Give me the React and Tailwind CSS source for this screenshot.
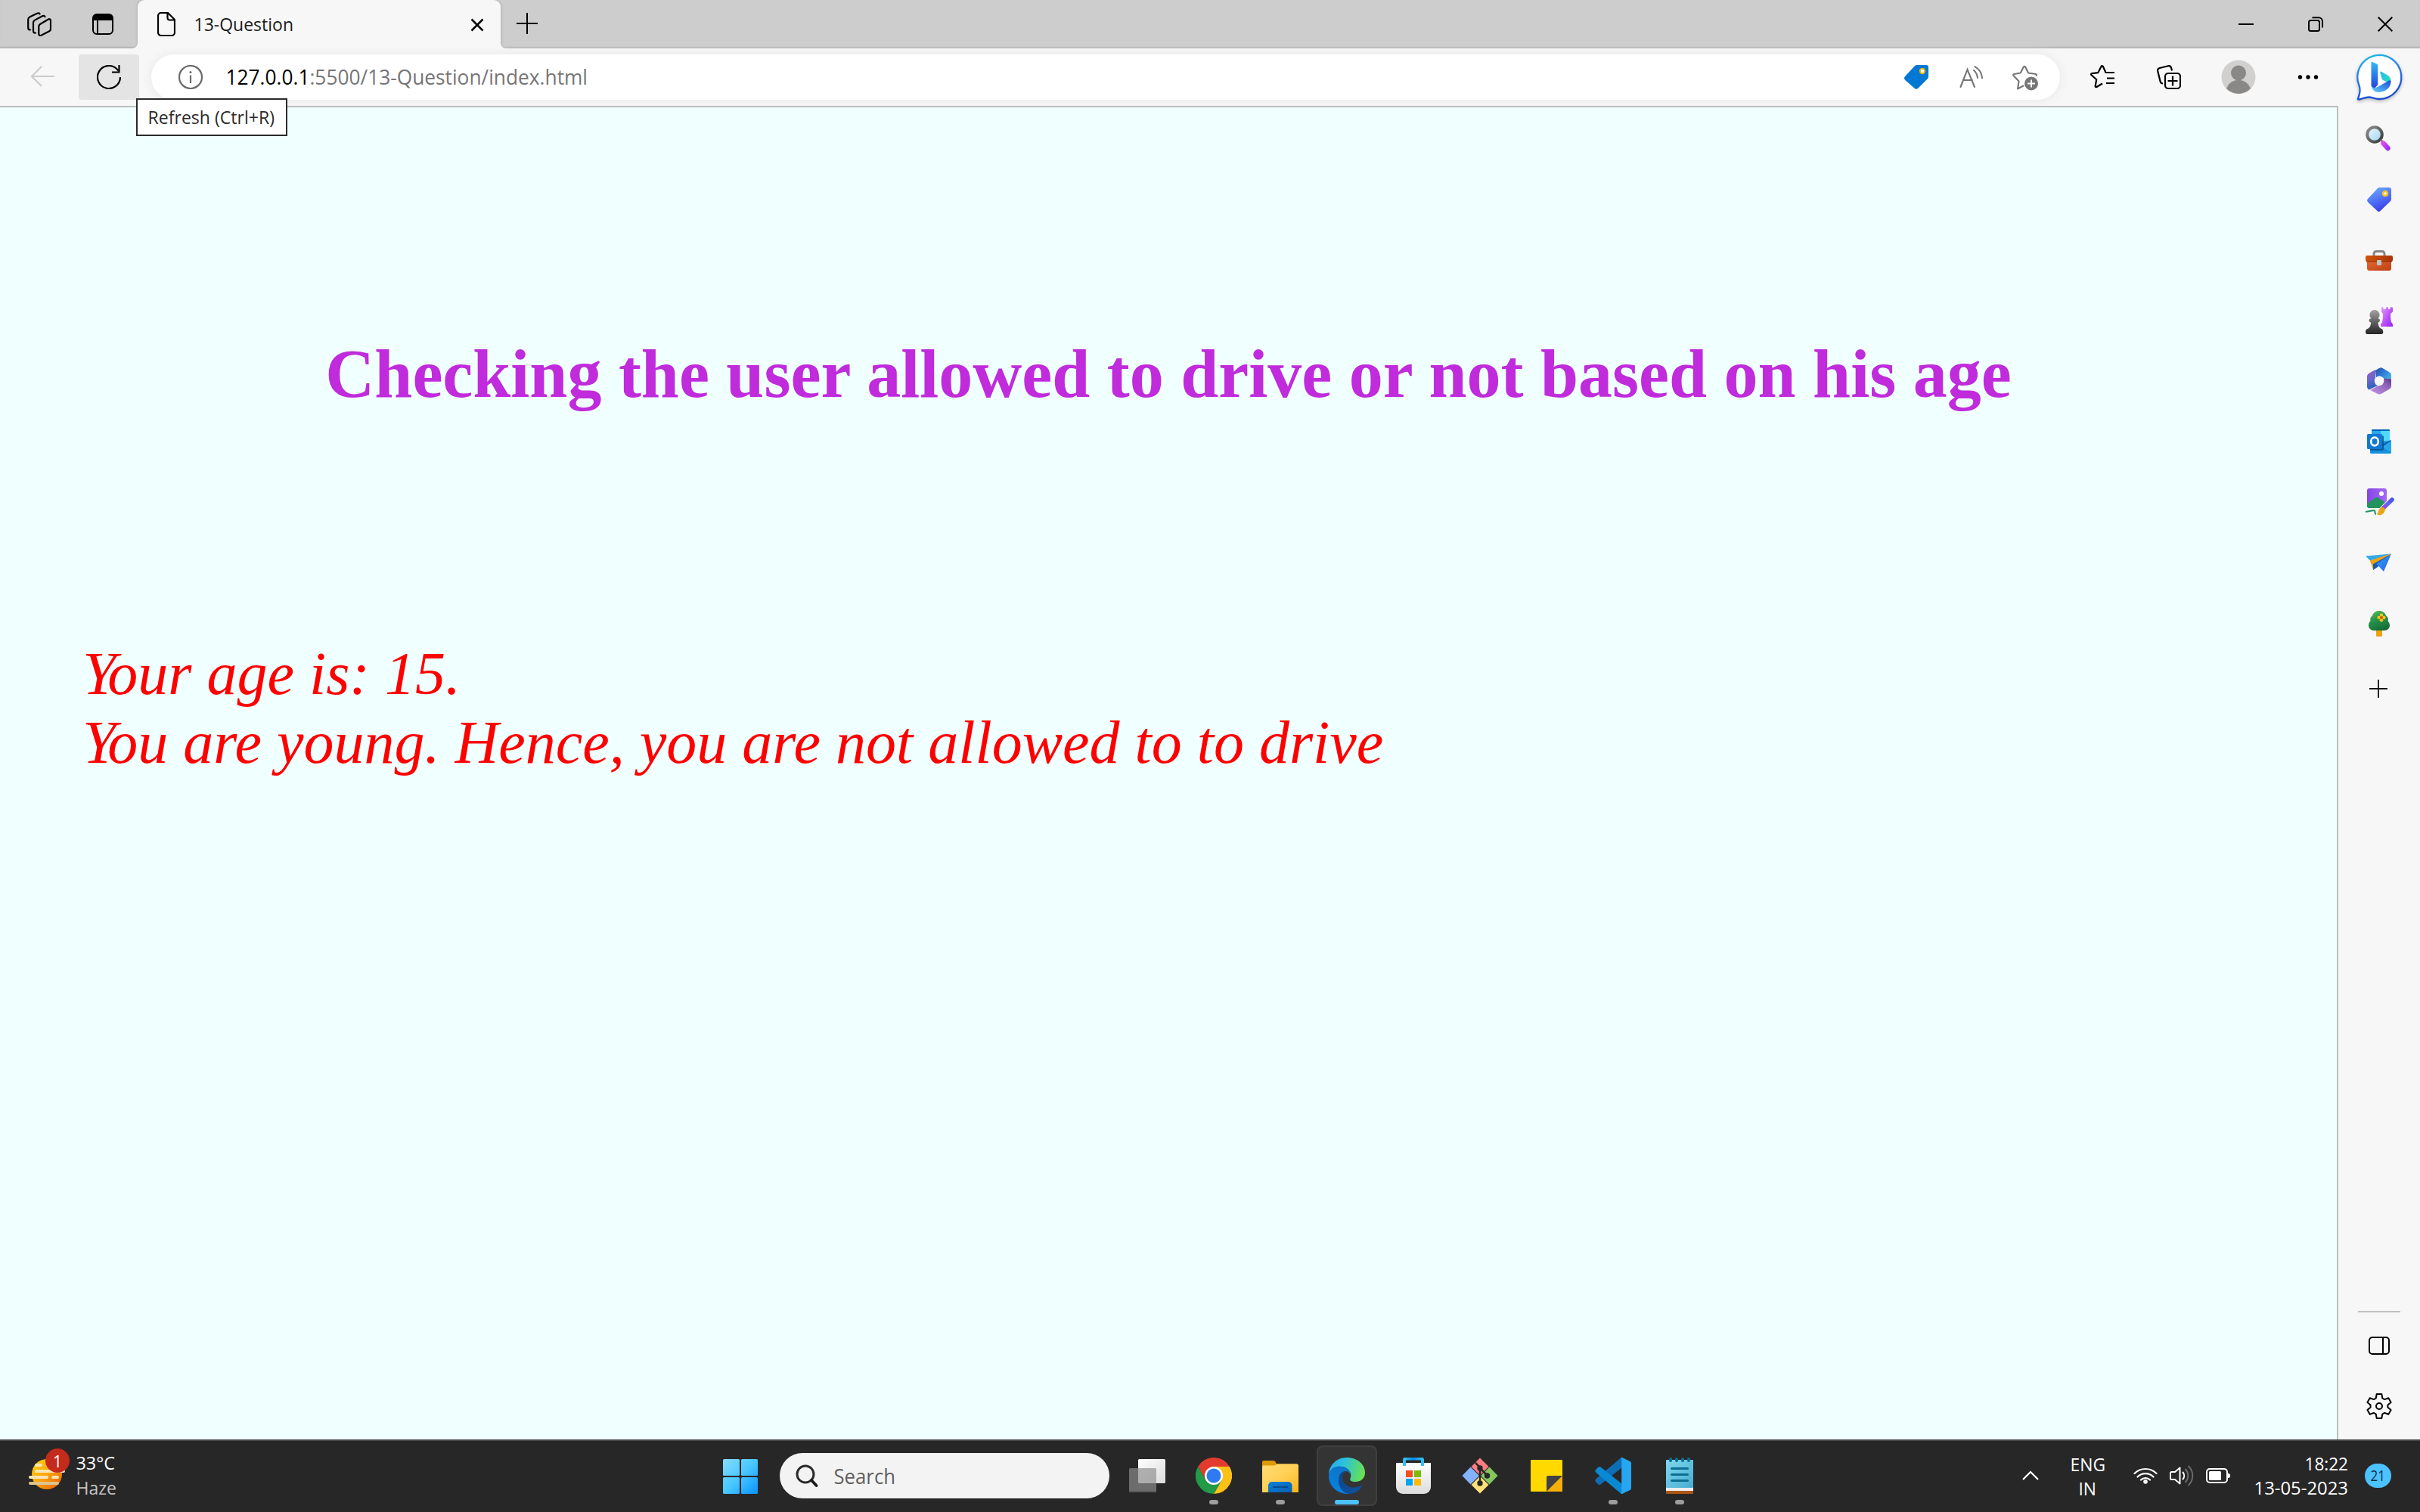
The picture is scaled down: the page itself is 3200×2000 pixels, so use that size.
import React from "react";

const UI = "font-['Open_Sans','Noto_Sans',sans-serif]";

function Icon({ w, h, vb, className = "", children }) {
  return (
    <svg width={w} height={h} viewBox={vb || `0 0 ${w} ${h}`} fill="none" className={"block shrink-0 " + className}>
      {children}
    </svg>
  );
}

function Label({ width, size, children, className = "" }) {
  return (
    <svg width={width} height={Math.round(size * 1.33)} className={"block shrink-0 overflow-visible " + className}>
      <text x={-1.5} y={size * 1.07 - 1.5} textLength={width + 1.5} lengthAdjust="spacingAndGlyphs" fontSize={size} fill="currentColor">
        {children}
      </text>
    </svg>
  );
}

/* ---------- title bar ---------- */

function TitleBar() {
  return (
    <div className="flex h-16 items-start bg-[#cdcdcd] shadow-[inset_0_-3px_2px_-1px_#b4b4b4]">
      <div className="flex h-16 w-[182px] items-center pl-9">
        <Icon w={32} h={32} className="text-black">
          <g stroke="currentColor" strokeWidth="2.2" strokeLinejoin="round" strokeLinecap="round">
            <path d="M17 16 28 9.5c1.5-.8 3 0 3 1.8V22c0 1.5-.6 2.6-1.8 3.3L18.5 30.700c-1.6.8-3.2 0-3.2-1.8V19c0-1.5.6-2.300 1.700-3z" />
            <path d="M11 27.500c-1.800.3-3-.6-3-2.500V14c0-1.600.7-2.600 2-3.400L20 5.200c1.500-.8 3-.3 3.500 1" />
            <path d="M4 23.500c-1.800 0-2.800-1-2.800-2.800V10c0-1.600.7-2.600 2-3.400L13 1.700c1.500-.8 3-.5 3.600.7" />
          </g>
        </Icon>
        <Icon w={28} h={28} className="ml-[54px]">
          <rect x="1" y="1" width="26" height="26" rx="5" stroke="#000" strokeWidth="2" />
          <path d="M1 9V6a5 5 0 0 1 5-5h16a5 5 0 0 1 5 5v3z" fill="#000" />
          <path d="M7 8v19" stroke="#000" strokeWidth="2" />
        </Icon>
      </div>
      <div className="relative flex h-16 w-[480px] items-center rounded-t-[9px] bg-[#f7f7f7] pl-[26px] shadow-[0_0_4px_#a8a8a8] [clip-path:inset(0_-8px_0_-8px)]">
        <Icon w={24} h={32}>
          <path d="M5 1h9l9 9v17a4 4 0 0 1-4 4H5a4 4 0 0 1-4-4V5a4 4 0 0 1 4-4zM13.500 1v6.500a3 3 0 0 0 3 3H23" stroke="#000" strokeWidth="2.200" strokeLinejoin="round" />
        </Icon>
        <Label width={130} size={23.5} className="ml-[26px] text-[#1b1b1b]">13-Question</Label>
        <Icon w={18} h={18} className="ml-[234px] mt-[2px]">
          <path d="m1.500 1.500 15 15m0-15-15 15" stroke="#000" strokeWidth="2.500" />
        </Icon>
        <Icon w={8} h={8} className="absolute -left-2 bottom-0"><path d="M8 0v8H0c5 0 8-3 8-8z" fill="#f7f7f7" /></Icon>
        <Icon w={8} h={8} className="absolute -right-2 bottom-0"><path d="M0 0v8h8c-5 0-8-3-8-8z" fill="#f7f7f7" /></Icon>
      </div>
      <div className="flex h-[62px] flex-1 items-center pl-[21px]">
        <Icon w={28} h={28}>
          <path d="M14 0v28M0 14h28" stroke="#000" strokeWidth="2" />
        </Icon>
      </div>
      <div className="flex h-16 items-center gap-[72px] pr-9">
        <Icon w={20} h={20}><path d="M0 10h20" stroke="#000" strokeWidth="2" /></Icon>
        <Icon w={20} h={20}>
          <rect x="1" y="5" width="14" height="14" rx="2.500" stroke="#000" strokeWidth="2" />
          <path d="M5.500 1.200H14a5 5 0 0 1 5 5v8.300" stroke="#000" strokeWidth="2" />
        </Icon>
        <Icon w={20} h={20}><path d="m.7.7 18.600 18.600m0-18.600L.7 19.300" stroke="#000" strokeWidth="2" /></Icon>
      </div>
    </div>
  );
}

/* ---------- tool bar ---------- */

function ToolBar() {
  return (
    <div className="flex h-[76px] w-[3092px] items-start bg-[#f7f7f7] pt-2">
      <div className="flex h-[60px] w-[104px] items-center pl-10">
        <Icon w={32} h={28} className="-translate-y-px"><path d="M15 1 2 14l13 13M2 14h30" stroke="#cbcbcb" strokeWidth="2.200" /></Icon>
      </div>
      <div className="relative flex h-[60px] w-20 items-center justify-center rounded-[4px] bg-[#e4e4e4]">
        <Icon w={32} h={32}>
          <path d="M31 16A15 15 0 1 1 26.500 5.300L29 8" stroke="#000" strokeWidth="2.200" />
          <path d="M29.500 0v9.500H20" stroke="#000" strokeWidth="2.200" />
        </Icon>
        <div className="absolute left-[76px] top-[58px] z-10 flex h-[50px] w-[200px] items-center border-2 border-[#2b2b2b] bg-white pl-[15px] text-[#2b2b2b]">
          <Label width={166} size={23.5}>Refresh (Ctrl+R)</Label>
        </div>
      </div>
      <div className="ml-4 flex h-[60px] w-[2524px] items-center rounded-full bg-white pl-9 shadow-[0_0_14px_#e6e6e6]">
        <Icon w={32} h={32}>
          <circle cx="16" cy="16" r="15" stroke="#6b6b6b" strokeWidth="2.200" />
          <path d="M16 13.500V24" stroke="#6b6b6b" strokeWidth="2.200" />
          <circle cx="16" cy="9.500" r="1.500" fill="#6b6b6b" />
        </Icon>
        <Label width={477} size={28} className="ml-8 text-[#767676]">
          <tspan fill="#000">127.0.0.1</tspan>:5500/13-Question/index.html
        </Label>
        <div className="ml-auto flex items-center pr-[27px]">
          <Icon w={32} h={32}>
            <path d="M17 0h12a3 3 0 0 1 3 3v12c0 1.500-.5 2.600-1.500 3.600L18.500 30.500c-1.500 1.700-3.700 1.700-5.200 0L1.300 20c-1.700-1.500-1.700-3.500 0-5.200L13.600 1.500C14.600.5 15.600 0 17 0z" fill="#0078d4" />
            <circle cx="24" cy="8" r="3.200" fill="#fff" stroke="#f0b400" strokeWidth="2" />
          </Icon>
          <Icon w={32} h={30} className="ml-[41px]">
            <g stroke="#767676" strokeWidth="2.100" strokeLinecap="round">
              <path d="m1.500 28 9-23 9.500 23M4.500 19h12.500" />
              <path d="M19 6c3 2.500 4.500 5.500 5 10M20.500 1.200c5.500 3.300 9 8.300 9.500 15" />
            </g>
          </Icon>
          <Icon w={36} h={34} className="ml-[38px] mt-[2px]">
            <path d="m7 31.500 1.600-10L1.500 14c-.7-.8-.3-1.800.8-2l8.400-1.500 4.200-8c.5-1 1.700-1 2.200 0l4 8L31 12c.8.2 1.200 1 .7 2M7 31.500l7.500-4" stroke="#767676" strokeWidth="2.100" strokeLinejoin="round" strokeLinecap="round" />
            <circle cx="25" cy="24.500" r="9" fill="#767676" />
            <path d="M25 19.500v10m-5-5h10" stroke="#fff" strokeWidth="2" />
          </Icon>
        </div>
      </div>
      <div className="flex h-[60px] items-center pl-10">
        <Icon w={32} h={32}>
          <path d="M16 24.500 8.500 29c-1 .6-2 0-1.800-1.200l1.500-8.500-6.700-6c-.8-.8-.4-2 .8-2.200l8-1L14.500 2c.6-1.200 1.800-1.200 2.400 0L20.500 10H32M22 17.500h10M21 24h11" stroke="#000" strokeWidth="2.200" strokeLinejoin="round" />
        </Icon>
        <Icon w={32} h={32} className="ml-14">
          <rect x="11" y="11" width="20" height="20" rx="4" stroke="#000" strokeWidth="2.200" />
          <path d="M21 14.500v13M14.500 21h13" stroke="#000" strokeWidth="2.200" />
          <path d="M8 24.500c-1.700 0-3-1-3.400-2.700L1.200 8C.8 6 2 4.500 3.800 4L15 1.200c2-.4 3.500.6 4 2.500L20 7.500" stroke="#000" strokeWidth="2.200" />
        </Icon>
        <Icon w={46} h={46} className="ml-[53px]">
          <circle cx="23" cy="23" r="22.500" fill="#d2d0ce" />
          <circle cx="23" cy="17.500" r="10" fill="#8a8886" />
          <path d="M7 38a17 17 0 0 1 32 0 22 22 0 0 1-32 0z" fill="#8a8886" />
        </Icon>
        <Icon w={28} h={6} className="ml-[55px]">
          <circle cx="3.500" cy="3" r="2.700" fill="#000" /><circle cx="14" cy="3" r="2.700" fill="#000" /><circle cx="24.500" cy="3" r="2.700" fill="#000" />
        </Icon>
      </div>
    </div>
  );
}

/* ---------- side bar ---------- */

function Slot({ children }) {
  return <div className="flex h-20 shrink-0 items-center justify-center">{children}</div>;
}

function SideBar() {
  return (
    <div className="-mt-[76px] flex w-[108px] shrink-0 flex-col bg-[#f7f7f7] pt-2">
      <div className="flex h-[72px] justify-center">
        <Icon w={60} h={64} className="overflow-visible">
          <path d="M2 58.500C5 51 5.500 46 3.500 41A29 29 0 1 1 30 59c-6 0-9-2.500-14-2.500-4 0-9 2.500-12.500 3-1 .2-1.900 0-1.500-1z" fill="#fff" stroke="url(#bingRing)" strokeWidth="2.300" className="drop-shadow-[0_2px_2px_rgba(0,0,0,.25)]" />
          <path d="M19.500 10.500c0-.6.6-.9 1.200-.7l6 2.700c1.200.6 1.600 1.400 1.600 2.600V40l-4 4.500c-3 0-4.800-1.500-4.800-4z" fill="url(#bingB1)" />
          <path d="M31.500 24.500c-.6-1.600.3-2.400 1.700-1.600l8 4.600c3 1.700 4.500 4.500 4.300 8.500l-2 4.500-2.500-3.500-5.500-2.800c-1-.5-1.600-1.200-2-2.200z" fill="url(#bingB2)" />
          <path d="M45.500 35c.5 9.500-8 15-16.500 15-5 0-8.500-3-9.500-9.500 1.500 4 5 4.500 8.500 2.500l14-8c2-.9 3-1 3.500 0z" fill="url(#bingB3)" />
          <defs>
            <linearGradient id="bingRing" x1="0" y1="0" x2="0.3" y2="1"><stop stopColor="#19c5e8" /><stop offset=".45" stopColor="#2b7de6" /><stop offset="1" stopColor="#1b4fd0" /></linearGradient>
            <linearGradient id="bingB1" x1="0" y1="0" x2="0" y2="1"><stop stopColor="#35b9f5" /><stop offset="1" stopColor="#2343dc" /></linearGradient>
            <linearGradient id="bingB2" x1="0" y1="0" x2="1" y2="1"><stop stopColor="#25b6ee" /><stop offset="1" stopColor="#2ee8b5" /></linearGradient>
            <linearGradient id="bingB3" x1="0" y1="1" x2="1" y2="0"><stop stopColor="#5fd5fb" /><stop offset="1" stopColor="#1d48dd" /></linearGradient>
          </defs>
        </Icon>
      </div>
      <Slot>
        <Icon w={36} h={34} className="-translate-y-px">
          <circle cx="12" cy="12" r="9.800" fill="url(#lens)" stroke="url(#lensRing)" strokeWidth="4" />
          <path d="m20 19 3 3" stroke="#777" strokeWidth="3" />
          <path d="m23.500 23.500 6 6.500" stroke="url(#lensH)" strokeWidth="6.500" strokeLinecap="round" />
          <defs>
            <linearGradient id="lens" x1="0" y1="0" x2="1" y2="1"><stop stopColor="#f4f8fb" /><stop offset="1" stopColor="#98d4f7" /></linearGradient>
            <linearGradient id="lensRing" x1="0" y1="0" x2="1" y2="1"><stop stopColor="#909090" /><stop offset="1" stopColor="#3a3a3a" /></linearGradient>
            <linearGradient id="lensH" x1="22" y1="22" x2="32" y2="32" gradientUnits="userSpaceOnUse"><stop stopColor="#ec4cf0" /><stop offset="1" stopColor="#8b2cf5" /></linearGradient>
          </defs>
        </Icon>
      </Slot>
      <Slot>
        <Icon w={32} h={32}>
          <path d="M17 0h12a3 3 0 0 1 3 3v12c0 1.500-.5 2.600-1.500 3.600L17.500 31c-1.200 1.200-2.800 1.200-4 0L1.200 19.500c-1.500-1.500-1.500-3.300 0-4.800L13.600 1.500C14.600.5 15.600 0 17 0z" fill="url(#tagG)" />
          <circle cx="24" cy="8" r="3" fill="#fff" stroke="#fcc419" strokeWidth="2.500" />
          <defs><linearGradient id="tagG" x1=".3" y1="0" x2=".7" y2="1"><stop stopColor="#6aa8f8" /><stop offset=".6" stopColor="#4a65f5" /><stop offset="1" stopColor="#3b35e0" /></linearGradient></defs>
        </Icon>
      </Slot>
      <Slot>
        <Icon w={36} h={28} className="translate-y-px">
          <path d="M11 8V4.500A3.500 3.500 0 0 1 14.500 1.500h7A3.500 3.500 0 0 1 25 4.500V8" stroke="#858585" strokeWidth="3" />
          <path d="M2 12h32v12a3 3 0 0 1-3 3H5a3 3 0 0 1-3-3z" fill="url(#boxG)" />
          <rect y="7" width="36" height="8" rx="2" fill="url(#boxL)" /><path d="M1 15h34" stroke="#8b2d08" />
          <rect x="15" y="13" width="6" height="7" rx="1.200" fill="#bfc3c7" />
          <defs>
            <linearGradient id="boxG" x1="0" y1="0" x2="1" y2="1"><stop stopColor="#e96a35" /><stop offset="1" stopColor="#bb3f12" /></linearGradient>
            <linearGradient id="boxL" x1="0" y1="0" x2="1" y2="0"><stop stopColor="#d0540c" /><stop offset="1" stopColor="#a83508" /></linearGradient>
          </defs>
        </Icon>
      </Slot>
      <Slot>
        <Icon w={36} h={36}>
          <path d="M21 1c0-1 2.500-1 2.500 0v2H27V1c0-1 3-1 3 0v2h2.500V1c0-1 3.500-1 3.500 0v5.500L33 9c0 5 .3 8 1 11l2 3v3H20v-3l2-3c.7-3 1-6 1-11l-2-2.500z" fill="url(#rookG)" />
          <path d="M12 4a6.500 6.500 0 0 1 4.500 11.200c3.300 0 3.300 4.800 0 5.300.3 4 1.300 6.500 3.500 8 2.700.7 3.300 2.500 3.300 5 0 1.500-.8 2.500-2.500 2.500H2.500C.8 36 0 35 0 33.500c0-2.500.7-4.300 3.500-5 2.200-1.500 3.500-4 3.800-8-3.600-.5-3.600-5.300.2-5.300A6.500 6.500 0 0 1 12 4z" fill="url(#pawnG)" />
          <defs>
            <linearGradient id="rookG" x1="0" y1="0" x2="1" y2="1"><stop stopColor="#dfa0fa" /><stop offset=".6" stopColor="#b84cf8" /><stop offset="1" stopColor="#9a20f5" /></linearGradient>
            <linearGradient id="pawnG" x1="0" y1="0" x2="0" y2="1"><stop stopColor="#a3a3a3" /><stop offset=".5" stopColor="#606060" /><stop offset="1" stopColor="#242424" /></linearGradient>
          </defs>
        </Icon>
      </Slot>
      <Slot>
        <Icon w={32} h={36}>
          <path d="M11 4 16 1c2-1 3-1 5 .2L29 6c2 1.200 3 2.500 3 5v12.500C29 18 24 17 21 13.500c-2-2-6-3-9 0z" fill="url(#mA)" />
          <path d="M11 3 3 7.500C1 8.700 0 10 0 12.500V25c0 2 1 3.500 2.500 4.500L14 24c-4-2-5-6-3-10z" fill="url(#mB)" />
          <path d="M32 15.500V24c0 2.500-1 4-3 5l-9.500 5.500c-2 1.200-4.500 1.200-6.500 0L4 30l12-6.500c5-1 7-5 6-9z" fill="url(#mC)" />
          <circle cx="16" cy="18" r="6.200" fill="#f7f7f7" />
          <defs>
            <linearGradient id="mA" x1="0" y1="0" x2="1" y2="1"><stop stopColor="#234fa5" /><stop offset=".35" stopColor="#2f75d2" /><stop offset="1" stopColor="#50d0f2" /></linearGradient>
            <linearGradient id="mB" x1="0" y1="0" x2=".3" y2="1"><stop stopColor="#9c55bb" /><stop offset=".5" stopColor="#6d68cf" /><stop offset="1" stopColor="#2860be" /></linearGradient>
            <linearGradient id="mC" x1="1" y1="0" x2="0" y2="1"><stop stopColor="#573187" /><stop offset=".3" stopColor="#8b62b6" /><stop offset="1" stopColor="#c594eb" /></linearGradient>
          </defs>
        </Icon>
      </Slot>
      <Slot>
        <Icon w={32} h={32}>
          <rect x="6" width="24" height="30" rx="1.500" fill="#28a8ea" /><path d="M6 2V1.500C6 .7 6.700 0 7.500 0h21c.8 0 1.500.7 1.500 1.500V2z" fill="#0364b8" />
          <path d="M18 2h12v13H18z" fill="#50d9ff" />
          <path d="M4 16h28v14.500c0 .8-.7 1.500-1.500 1.500h-25C4.700 32 4 31.300 4 30.500z" fill="#1490df" />
          <path d="m32 15-12 8 12 7.500z" fill="#28a8ea" /><path d="m32 15-12 8-2-1.500L31 14z" fill="#0a5ba8" />
          <path d="M4 8h16a2 2 0 0 1 2 2v16a2 2 0 0 1-2 2H4z" fill="#064f86" opacity=".8" />
          <rect y="6" width="20" height="20" rx="1.500" fill="#0f78d4" />
          <ellipse cx="10" cy="16" rx="4.800" ry="5.300" stroke="#fff" strokeWidth="2.700" />
        </Icon>
      </Slot>
      <Slot>
        <Icon w={36} h={36} className="overflow-visible">
          <rect x="2" width="26" height="26" rx="3" fill="url(#picG)" />
          <circle cx="21" cy="7" r="3" fill="#fff" />
          <path d="m2 20 11-7.500c1.500-1 2.500-1 4 0L28 20v3a3 3 0 0 1-3 3H5a3 3 0 0 1-3-3z" fill="#21945f" />
          <path d="M23 27 35.500 14.500" stroke="#f7f7f7" strokeWidth="8" strokeLinecap="round" />
          <path d="M23 26.500 35 15" stroke="url(#brG)" strokeWidth="5.500" strokeLinecap="round" />
          <path d="M15 34.500c2-1 1.500-9 7-9.500 4 0 5 4 2 7.500-2.500 3-6.500 3.500-9 2z" fill="#e5a812" />
          <path d="M0 31c4-.5 10-2.500 12-1.500 1.500 1-1 3.500 2 4.500" stroke="#1f9263" strokeWidth="2" />
          <defs>
            <linearGradient id="picG" x1="0" y1="0" x2="1" y2="0"><stop stopColor="#8546e5" /><stop offset="1" stopColor="#a668f5" /></linearGradient>
            <linearGradient id="brG" x1="23" y1="26" x2="35" y2="14" gradientUnits="userSpaceOnUse"><stop stopColor="#a43ee8" /><stop offset=".5" stopColor="#6367f0" /><stop offset="1" stopColor="#4b50ea" /></linearGradient>
          </defs>
        </Icon>
      </Slot>
      <Slot>
        <Icon w={34} h={24} className="-translate-x-px">
          <path d="m0 3.500 34-3L6.500 10z" fill="#36a9ea" />
          <path d="M34 .5 6 9.500 10 22l3-6z" fill="#eca214" />
          <path d="M10 22V14l23-13-17 17z" fill="#1759b4" />
          <path d="M34 .5 14.500 14l9.500 10z" fill="url(#plG)" />
          <path d="M34 .5 6 9.500 8 15z" fill="#eca214" />
          <defs><linearGradient id="plG" x1="0" y1="0" x2="1" y2="1"><stop stopColor="#36a4f2" /><stop offset="1" stopColor="#2360e5" /></linearGradient></defs>
        </Icon>
      </Slot>
      <Slot>
        <Icon w={28} h={34} className="translate-y-px">
          <rect x="10" y="23" width="8" height="11" rx="1.500" fill="#eea313" />
          <path d="M14 0c4.500 0 8 2.500 9 6.500 2.500 1 3.500 4.500 2.500 7 1.500 1.500 2.500 4 2.500 5.800 0 4-3.500 6.700-7 6.700H7c-4 0-7-3-7-6.700 0-2.500.8-4.500 2.500-6C1.700 10.500 2.500 8 5 6.500 6 2.500 9.500 0 14 0z" fill="url(#trG)" />
          <g fill="#ffc21a"><circle cx="17" cy="5.700" r="2.300" /><circle cx="17" cy="12.300" r="2.300" /><circle cx="13.700" cy="9" r="2.300" /><circle cx="20.300" cy="9" r="2.300" /></g>
          <circle cx="17" cy="9" r="1.900" fill="#c8590c" />
          <defs><linearGradient id="trG" x1=".3" y1="0" x2=".7" y2="1"><stop stopColor="#55b653" /><stop offset=".4" stopColor="#27954b" /><stop offset="1" stopColor="#166a34" /></linearGradient></defs>
        </Icon>
      </Slot>
      <div className="flex h-[94px] shrink-0 items-center justify-center">
        <Icon w={24} h={24} className="-translate-x-px"><path d="M12 0v24M0 12h24" stroke="#111" strokeWidth="1.800" /></Icon>
      </div>
      <div className="mt-auto flex flex-col items-center">
        <div className="h-[2px] w-14 bg-[#c0c0c0]" />
        <Icon w={28} h={24} className="mt-8">
          <rect x="1" y="1" width="26" height="22" rx="4" stroke="#000" strokeWidth="2" /><path d="M19 1v22" stroke="#000" strokeWidth="2" />
        </Icon>
        <Icon w={34} h={34} className="mb-[27px] mt-[51px]">
          <path d="M13.700 1h6.600l1 5.500 2.800 1.600 5.200-1.900 3.300 5.700-4.200 3.600v3l4.200 3.600-3.300 5.700-5.200-1.900-2.800 1.600-1 5.500h-6.600l-1-5.500-2.800-1.600-5.200 1.900-3.300-5.700 4.200-3.600v-3L1.400 11.900l3.300-5.700 5.200 1.900 2.800-1.600z" stroke="#000" strokeWidth="2" strokeLinejoin="round" />
          <circle cx="17" cy="17" r="4" stroke="#000" strokeWidth="2" />
        </Icon>
      </div>
    </div>
  );
}

/* ---------- task bar ---------- */

function Task({ run, active, children }) {
  return (
    <div className="flex h-full w-[88px] items-center justify-center">
      <div className={"relative flex size-20 items-center justify-center rounded-lg " + (active ? "border-2 border-[#404040] bg-[#343434]" : "")}>
        {children}
        {run && <div className="absolute bottom-[2px] h-[6px] w-3 rounded-full bg-[#9d9d9d]" />}
        {active && <div className="absolute bottom-0 h-[6px] w-8 rounded-full bg-[#4cc2ff]" />}
      </div>
    </div>
  );
}

function TaskBar() {
  return (
    <div className="flex h-24 items-center border-t-2 border-[#474747] bg-[#272727] pb-[2px] text-white">
      <div className="flex w-[952px] items-center pl-[38px]">
        <div className="relative -mt-[6px]">
          <Icon w={54} h={54} className="overflow-visible">
            <circle cx="24" cy="28" r="20" fill="url(#sunG)" />
            <g stroke="#f6e6b4" strokeWidth="4" strokeLinecap="round"><path d="M10 16h6M25 16h6M10 24h36M2 32h22M32 32h6" /><path d="M2 40h36" stroke="#e0c48c" /></g>
            <defs><linearGradient id="sunG" x1="0" y1="0" x2="1" y2="1"><stop stopColor="#fdd40c" /><stop offset=".5" stopColor="#fda50c" /><stop offset="1" stopColor="#e2580c" /></linearGradient></defs>
          </Icon>
          <div className="absolute -top-[6px] left-[22px] flex size-8 items-center justify-center rounded-full bg-[#c42b1c] text-[22px] leading-none">1</div>
        </div>
        <div className="ml-[10px] flex flex-col">
          <Label width={50} size={23.5}>33°C</Label>
          <Label width={52} size={23.5} className="mt-[2px] text-[#c4c4c4]">Haze</Label>
        </div>
      </div>
      <div className="flex h-full items-center">
        <Icon w={46} h={46} className="ml-1 mt-[2px]">
          <g fill="url(#winG)"><rect width="22" height="22" rx="1.500" /><rect x="24" width="22" height="22" rx="1.500" /><rect y="24" width="22" height="22" rx="1.500" /><rect x="24" y="24" width="22" height="22" rx="1.500" /></g>
          <defs><linearGradient id="winG" x1="0" y1="0" x2="46" y2="46" gradientUnits="userSpaceOnUse"><stop stopColor="#86dcff" /><stop offset=".5" stopColor="#48c8ff" /><stop offset="1" stopColor="#0a93ff" /></linearGradient></defs>
        </Icon>
        <div className="ml-[29px] flex h-[60px] w-[436px] items-center rounded-full bg-[#f3f3f3] pl-[21px]">
          <Icon w={30} h={30}><circle cx="13" cy="13" r="11" stroke="#2b2b2b" strokeWidth="3" /><path d="m21 21 6.500 7" stroke="#1b1b1b" strokeWidth="3.800" strokeLinecap="round" /></Icon>
          <Label width={80} size={28} className="ml-[22px] mt-[2px] text-[#5f5f5f]">Search</Label>
        </div>
        <div className="flex h-full items-center pl-[6px]">
          <Task>
            <Icon w={48} h={46}>
              <rect x="12" y="1" width="36" height="32" rx="1.500" fill="url(#tvG)" />
              <rect y="13" width="36" height="32" rx="1.500" fill="#8f8f8f" fillOpacity=".68" /><path d="M0 44h36" stroke="#5c5c5c" strokeWidth="2" />
              <defs><linearGradient id="tvG" x1="0" y1="0" x2="1" y2="1"><stop stopColor="#fff" /><stop offset="1" stopColor="#dcdcdc" /></linearGradient></defs>
            </Icon>
          </Task>
          <Task run>
            <Icon w={48} h={48}>
              <path d="M24 12h20.800A24 24 0 0 0 3.200 12l10.400 18z" fill="#e33b2e" />
              <path d="M24 12h20.800A24 24 0 0 1 24 48l10.400-18z" fill="#fbc116" />
              <path d="M34.400 30 24 48A24 24 0 0 1 3.200 12l10.400 18z" fill="#229a48" />
              <circle cx="24" cy="24" r="12" fill="#fff" /><circle cx="24" cy="24" r="9.500" fill="#2f7af0" />
            </Icon>
          </Task>
          <Task run>
            <Icon w={48} h={42} className="translate-y-px">
              <path d="M0 2a2 2 0 0 1 2-2h12c3 0 4 2 5 4.500h27v10H0z" fill="#dd9a05" />
              <path d="M0 8c0-1 .8-1.500 2-1.500h14c2 0 2.500-2 4-2h26a2 2 0 0 1 2 2V42H0z" fill="url(#foG)" />
              <path d="M8 42V33a5 5 0 0 1 5-5h21.500a5 5 0 0 1 5 5v9z" fill="url(#foB)" /><path d="M15 35h18" stroke="#034a8b" strokeWidth="2" strokeLinecap="round" />
              <defs><linearGradient id="foG" x1="0" y1="0" x2="1" y2="1"><stop stopColor="#ffdc74" /><stop offset=".5" stopColor="#ffd056" /><stop offset="1" stopColor="#f9b416" /></linearGradient><linearGradient id="foB" x1="0" y1="0" x2="1" y2="1"><stop stopColor="#0f80d8" /><stop offset="1" stopColor="#0460b5" /></linearGradient></defs>
            </Icon>
          </Task>
          <Task active>
            <Icon w={48} h={48}>
              <defs>
                <linearGradient id="eA" x1="0" y1=".3" x2="1" y2=".5"><stop stopColor="#2da9f0" /><stop offset=".4" stopColor="#2bc2dc" /><stop offset=".75" stopColor="#4fd584" /><stop offset="1" stopColor="#6be24e" /></linearGradient>
                <linearGradient id="eB" x1=".6" y1="0" x2=".3" y2="1"><stop stopColor="#0d74c8" /><stop offset="1" stopColor="#0583e0" /></linearGradient>
                <linearGradient id="eC" x1="0" y1="0" x2="1" y2="1"><stop stopColor="#10458d" /><stop offset="1" stopColor="#0c529f" /></linearGradient>
              </defs>
              <path d="M0 22C1 9 11 0 24 0c14 0 24 9 24 20 0 8-6 12-12.500 12-6 0-8-2-7-4.500C31 23 28 12 15 12 7 12 2 16 0 22z" fill="url(#eA)" />
              <path d="M0 24c0-7 6-12.500 14-12.500 9 0 15 6 15.500 11.500-1-3-4-5-7.500-5-6 0-9 6-8.500 12 .7 8 6 15 13.500 17.800C12 49 0 38 0 24z" fill="url(#eB)" />
              <path d="M23 18.500c-3.500 1.500-5.500 5-5 9 .6 7 7 12 15 12 4.500 0 7.500-1.200 10.500-3 .8-.4 1 0 .6.7C41 43.500 35 48 27 48c-8.500-1-14-9-14-17.500 0-7 4.500-12.500 10-12z" fill="url(#eC)" />
            </Icon>
          </Task>
          <Task>
            <Icon w={46} h={48}>
              <path d="M0 7h46v32a9 9 0 0 1-9 9H9a9 9 0 0 1-9-9z" fill="url(#stG)" />
              <path d="M11 11V3a1.500 1.500 0 0 1 1.500-1.500h21A1.500 1.500 0 0 1 35 3v8" stroke="url(#stH)" strokeWidth="4" />
              <path d="M13 17h9v9h-9z" fill="#f35022" /><path d="M24 17h9v9h-9z" fill="#80bb02" /><path d="M13 28h9v9h-9z" fill="#02a5f0" /><path d="M24 28h9v9h-9z" fill="#ffba08" />
              <defs><linearGradient id="stG" x1="0" y1="0" x2="0" y2="1"><stop stopColor="#fff" /><stop offset="1" stopColor="#dcdcdc" /></linearGradient><linearGradient id="stH" x1="0" y1="0" x2="1" y2="0"><stop stopColor="#36c0f3" /><stop offset=".5" stopColor="#098ae6" /><stop offset="1" stopColor="#36c0f3" /></linearGradient></defs>
            </Icon>
          </Task>
          <Task>
            <Icon w={48} h={48}>
              <path d="m24 .5 11.500 11.500L24 23.500 12.500 12z" fill="#ff7c80" />
              <path d="m36.500 12.500 11 11.500-11 11.500L25 24z" fill="#82c95c" />
              <path d="M11.500 12.500 23 24 11.500 35.500.5 24z" fill="#84b2ff" />
              <path d="M24 24.500 35.500 36 24 47.500 12.500 36z" fill="#ffdf78" />
              <path d="m18 7 6 6v20M24 14l9 9" stroke="#272727" strokeWidth="2.500" />
              <g fill="#272727"><circle cx="24" cy="14" r="3.700" /><circle cx="33.500" cy="24" r="3.700" /><circle cx="24" cy="34" r="3.700" /></g>
            </Icon>
          </Task>
          <Task>
            <Icon w={42} h={42}>
              <rect width="42" height="42" rx="1" fill="#ffd900" /><path d="M21 42h20a1 1 0 0 0 1-1V21z" fill="#f6ae08" /><path d="M23 21h19L21 42V23a2 2 0 0 1 2-2z" fill="#424242" />
            </Icon>
          </Task>
          <Task run>
            <Icon w={48} h={48}>
              <path d="M36 0v13L7.500 35.500c-1 .8-2 .7-3 0l-3-3c-1.500-1.500-1.500-3 0-4.500L33 1.500C34 .5 35 0 36 0z" fill="#0d6db5" />
              <path d="M36 48V35L7.500 12.500c-1-.8-2-.7-3 0l-3 3c-1.500 1.500-1.500 3 0 4.500L33 46.500c1 1 2 1.500 3 1.500z" fill="#0b88d2" />
              <path d="m36 0 10 4.700c1.300.6 2 1.500 2 3v32.600c0 1.500-.7 2.400-2 3L36 48c-1.500 0-2.500-.8-3-1.500 1 .9 2.200.2 2.200-1.200V2.700C35.200 1.300 34 .6 33 1.500 33.600.7 34.600 0 36 0z" fill="#26a5f0" />
            </Icon>
          </Task>
          <Task run>
            <Icon w={36} h={48}>
              <rect y="38" width="36" height="10" rx="1" fill="#ad5612" /><rect y="36" width="36" height="8" fill="#eee" /><rect y="3" width="36" height="37" rx="1" fill="url(#npG)" />
              <path d="M6 2v2M14 2v2M22 2v2M30 2v2" stroke="#0b6e92" strokeWidth="4" strokeLinecap="round" />
              <path d="M7.500 14.500h21M7.500 22.500h21M7.500 30.500h21" stroke="#0b6e92" strokeWidth="3" strokeLinecap="round" />
              <defs><linearGradient id="npG" x1="0" y1="0" x2="1" y2="1"><stop stopColor="#80d8ef" /><stop offset="1" stopColor="#46abd0" /></linearGradient></defs>
            </Icon>
          </Task>
        </div>
      </div>
      <div className="ml-auto flex items-center pr-[38px]">
        <Icon w={22} h={13} className="-translate-y-px"><path d="M1 12 11 2l10 10" stroke="#fff" strokeWidth="2.200" /></Icon>
        <div className="ml-[42px] flex w-[46px] flex-col items-center gap-px pt-[3px]">
          <Label width={45} size={23.5}>ENG</Label>
          <Label width={22} size={23.5}>IN</Label>
        </div>
        <Icon w={32} h={24} className="ml-[37px] -translate-y-px">
          <g stroke="#fff" strokeWidth="2.200" strokeLinecap="round"><path d="M1.500 10a20.500 20.500 0 0 1 29 0M5.500 14.500a14.800 14.800 0 0 1 21 0M10 18.500a8.600 8.600 0 0 1 12 0" /></g><circle cx="16" cy="21" r="2.800" fill="#fff" />
        </Icon>
        <Icon w={32} h={28} className="ml-4">
          <path d="M13.500 3.500v21L7 19H2.500A1.500 1.500 0 0 1 1 17.500v-7A1.500 1.500 0 0 1 2.500 9H7z" stroke="#fff" strokeWidth="2" strokeLinejoin="round" />
          <path d="M17.500 9.500a7 7 0 0 1 0 9" stroke="#fff" strokeWidth="2" strokeLinecap="round" />
          <path d="M21 5.500c4.500 5 4.500 12 0 17M25 1.500c7 7 7 18 0 25" stroke="#6a6a6a" strokeWidth="2" strokeLinecap="round" />
        </Icon>
        <Icon w={32} h={20} className="ml-4">
          <rect x="1" y="1" width="27" height="18" rx="4" stroke="#fff" strokeWidth="2" /><rect x="4" y="4" width="16" height="12" rx="1.500" fill="#fff" /><path d="M28 7h2.500L32 8.500v3L30.500 13H28z" fill="#fff" />
        </Icon>
        <div className="ml-8 flex w-[124px] flex-col items-end gap-px">
          <Label width={56} size={23.5}>18:22</Label>
          <Label width={123} size={23.5}>13-05-2023</Label>
        </div>
        <div className="ml-[22px] flex h-8 w-[35px] items-center justify-center rounded-full bg-[#4cc2ff] text-[#10303f]">
          <Label width={18} size={20}>21</Label>
        </div>
      </div>
    </div>
  );
}

/* ---------- page ---------- */

function Page() {
  return (
    <div className="flex-1 border-r-2 border-t-2 border-[#bdbdbd] bg-[#f0ffff] font-['Liberation_Serif',serif]">
      <h1 className="mt-[302px] text-center text-[90px] font-bold leading-[102px] text-[#c02bdc]">
        Checking the user allowed to drive or not based on his age
      </h1>
      <p className="mt-[300px] pl-[109px] text-[80px] italic leading-[91px] text-[#ff0000]">
        <span className="tracking-[-0.14em]">Y</span>our age is: 15.
        <br />
        <span className="tracking-[-0.14em]">Y</span>ou are young. Hence, you are not allowed to to drive
      </p>
    </div>
  );
}

export default function App() {
  return (
    <div className={"flex h-[2000px] w-[3200px] flex-col overflow-hidden bg-[#f7f7f7] " + UI}>
      <TitleBar />
      <ToolBar />
      <div className="flex flex-1">
        <Page />
        <SideBar />
      </div>
      <TaskBar />
    </div>
  );
}
